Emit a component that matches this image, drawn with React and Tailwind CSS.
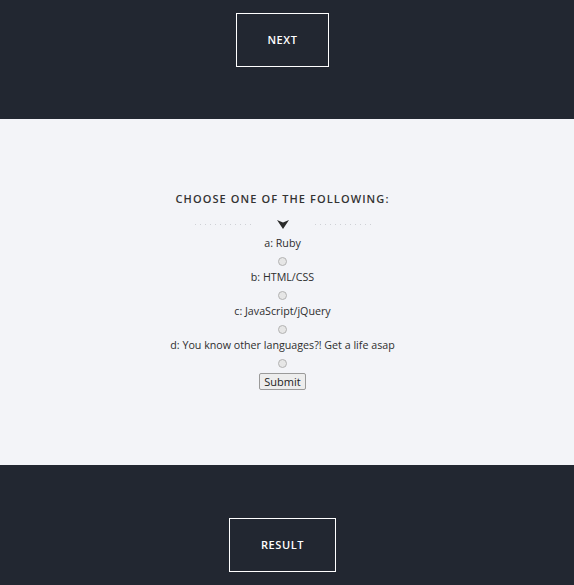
import React from "react";

const options = [
  "a: Ruby",
  "b: HTML/CSS",
  "c: JavaScript/jQuery",
  "d: You know other languages?! Get a life asap",
];

function Dots() {
  return (
    <div className="flex gap-[4px]">
      {Array.from({ length: 12 }).map((_, i) => (
        <span key={i} className="block w-[1px] h-[1px] bg-[#cfd1d6]" />
      ))}
    </div>
  );
}

export default function App() {
  return (
    <div
      className="w-[574px] h-[585px] flex flex-col"
      style={{ fontFamily: '"Open Sans", "Noto Sans", sans-serif' }}
    >
      <div className="h-[119px] shrink-0 bg-[#222731] flex justify-center pt-[13px] pr-[9px]">
        <button className="w-[93px] h-[54px] border border-white text-white text-[11px] font-semibold tracking-[0.6px] flex items-center justify-center">
          NEXT
        </button>
      </div>
      <div className="h-[346px] shrink-0 bg-[#f3f4f8] flex flex-col items-center pt-[71px] pr-[9px] text-[#2e2e2e]">
        <div className="shrink-0 text-[11px] font-semibold tracking-[1.1px] leading-[17px] h-[17px] text-[#333]">
          CHOOSE ONE OF THE FOLLOWING:
        </div>
        <div className="shrink-0 flex items-center h-[28px] pt-[6px]">
          <Dots />
          <svg width="12" height="9" viewBox="0 0 12 9" className="mx-[26px]">
            <path d="M0 0 L6 2.5 L12 0 L6 9 Z" fill="#2b2b2b" />
          </svg>
          <Dots />
        </div>
        {options.map((o) => (
          <React.Fragment key={o}>
            <div className="shrink-0 h-[17px] leading-[16px] text-[10.7px] font-medium">{o}</div>
            <div className="shrink-0 h-[17px] pt-[1px] flex items-center justify-center">
              <span className="block w-[9px] h-[9px] rounded-full border border-[#b3b3b3] bg-[#e6e6e6]" />
            </div>
          </React.Fragment>
        ))}
        <button className="shrink-0 mt-[2px] w-[47px] h-[17px] border border-[#9a9a9a] rounded-[2px] bg-[#ededed] text-[11px] leading-[15px] text-[#222]">
          Submit
        </button>
      </div>
      <div className="h-[120px] shrink-0 bg-[#222731] flex justify-center pt-[53px] pr-[9px]">
        <button className="w-[107px] h-[54px] border border-white text-white text-[11px] font-semibold tracking-[0.6px] flex items-center justify-center">
          RESULT
        </button>
      </div>
    </div>
  );
}
